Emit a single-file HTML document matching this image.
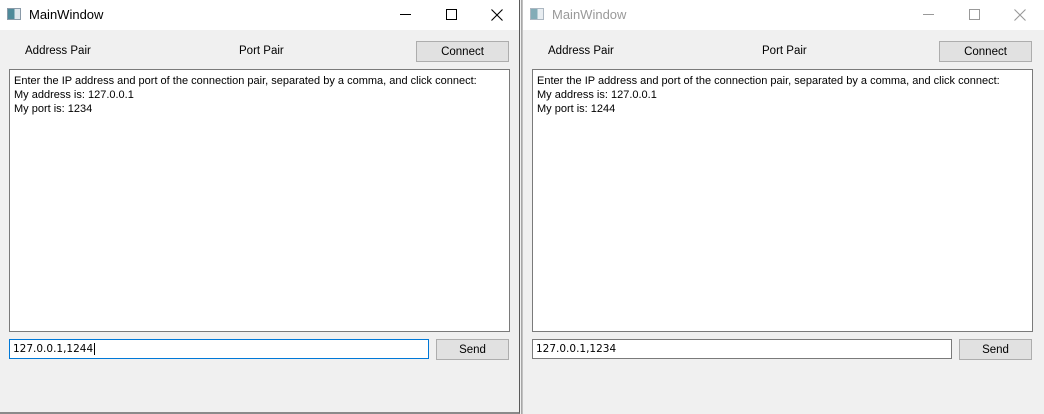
<!DOCTYPE html>
<html><head><style>
*{margin:0;padding:0;box-sizing:border-box}
body{width:1044px;height:414px;background:#f0f0f0;position:relative;overflow:hidden;font-family:"Liberation Sans",sans-serif;font-size:12px;color:#000}
.win{position:absolute;top:0;height:414px;background:#f0f0f0}
.tb{position:absolute;left:0;top:0;right:0;height:30px;background:#fff}
.abs{position:absolute}
.ico{position:absolute;left:7px;top:8px;width:14px;height:12px;border:1px solid #8a9aa8;background:linear-gradient(90deg,#4f8a9a 0 55%,#dfe6ec 55%)}
.title{position:absolute;left:29px;top:7px;font-size:13px}
.btn{position:absolute;background:#e1e1e1;border:1px solid #adadad;text-align:center;font-size:11.5px}
.ta{position:absolute;background:#fff;border:1px solid #7a7a7a;padding:4px 4px;line-height:14px;font-size:11px}
.inp{position:absolute;background:#fff;border:1px solid #7a7a7a;font-family:"DejaVu Sans",sans-serif;font-size:10.5px;padding:3px 3px;line-height:13px}
</style></head><body>
<div class="win" style="left:0;width:520px;border-right:1px solid #5a5a5a;border-bottom:2px solid #8a8a8a">
 <div class="tb"><div class="ico"></div><div class="title">MainWindow</div>
  <div class="abs" style="left:400px;top:14px;width:11px;height:1px;background:#000"></div>
  <div class="abs" style="left:446px;top:9px;width:11px;height:11px;border:1px solid #000"></div>
  <svg class="abs" style="left:491px;top:9px" width="12" height="12"><path d="M0.5 0.5L11.5 11.5M11.5 0.5L0.5 11.5" stroke="#000" stroke-width="1.1"/></svg>
 </div>
 <div class="abs" style="left:25px;top:45px;font-size:11.5px">Address Pair</div>
 <div class="abs" style="left:239px;top:45px;font-size:11.5px">Port Pair</div>
 <div class="btn" style="left:416px;top:41px;width:93px;height:21px;line-height:20px">Connect</div>
 <div class="ta" style="left:9px;top:69px;width:501px;height:263px">Enter the IP address and port of the connection pair, separated by a comma, and click connect:<br>My address is: 127.0.0.1<br>My port is: 1234</div>
 <div class="inp" style="left:9px;top:339px;width:420px;height:20px;border-color:#0078d7">127.0.0.1,1244<span style="border-left:1px solid #000;margin-left:1px"></span></div>
 <div class="btn" style="left:436px;top:339px;width:73px;height:21px;line-height:20px">Send</div>
</div>
<div class="abs" style="left:521px;top:0;width:3px;height:414px;background:linear-gradient(90deg,#9a9a9a,#e8e8e8)"></div>
<div class="win" style="left:523px;width:521px">
 <div class="tb"><div class="ico" style="opacity:.7"></div><div class="title" style="color:#999">MainWindow</div>
  <div class="abs" style="left:400px;top:14px;width:11px;height:1px;background:#999"></div>
  <div class="abs" style="left:446px;top:9px;width:11px;height:11px;border:1px solid #999"></div>
  <svg class="abs" style="left:491px;top:9px" width="12" height="12"><path d="M0.5 0.5L11.5 11.5M11.5 0.5L0.5 11.5" stroke="#999" stroke-width="1.1"/></svg>
 </div>
 <div class="abs" style="left:25px;top:45px;font-size:11.5px">Address Pair</div>
 <div class="abs" style="left:239px;top:45px;font-size:11.5px">Port Pair</div>
 <div class="btn" style="left:416px;top:41px;width:93px;height:21px;line-height:20px">Connect</div>
 <div class="ta" style="left:9px;top:69px;width:501px;height:263px">Enter the IP address and port of the connection pair, separated by a comma, and click connect:<br>My address is: 127.0.0.1<br>My port is: 1244</div>
 <div class="inp" style="left:9px;top:339px;width:420px;height:20px">127.0.0.1,1234</div>
 <div class="btn" style="left:436px;top:339px;width:73px;height:21px;line-height:20px">Send</div>
</div>
</body></html>
